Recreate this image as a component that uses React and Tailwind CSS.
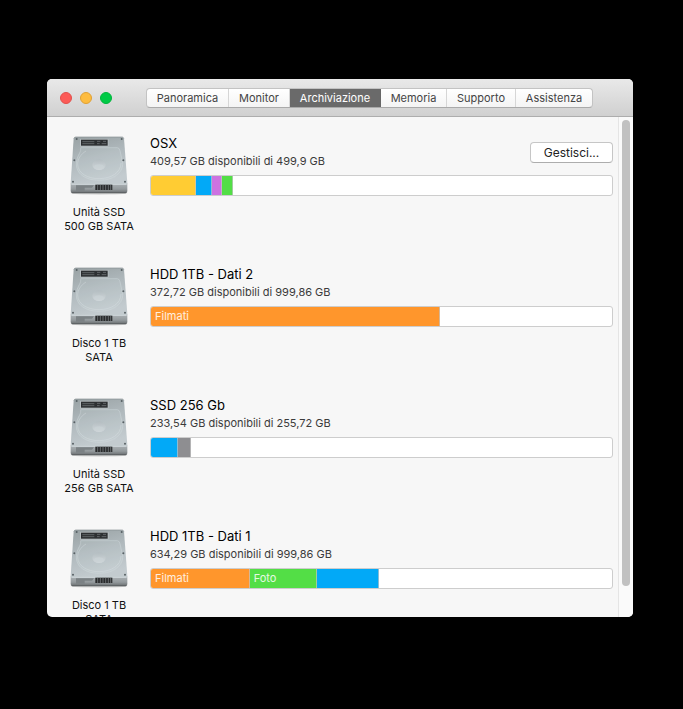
import React, { useId, useState } from "react";

const tabs = [
  { name: "Panoramica", width: "w-[82px]" },
  { name: "Monitor", width: "w-[61px]" },
  { name: "Archiviazione", width: "w-[91px]" },
  { name: "Memoria", width: "w-[66px]" },
  { name: "Supporto", width: "w-[69px]" },
  { name: "Assistenza", width: "w-[76px]" },
];

const disks = [
  {
    name: "OSX",
    free: "409,57 GB disponibili di 499,9 GB",
    label: ["Unità SSD", "500 GB SATA"],
    manage: true,
    segments: [
      { color: "bg-[#ffcc33]", share: 9.76 },
      { color: "bg-[#02a9f7]", share: 3.47 },
      { color: "bg-[#cc73e1]", share: 2.17 },
      { color: "bg-[#53de46]", share: 2.3 },
    ],
  },
  {
    name: "HDD 1TB - Dati 2",
    free: "372,72 GB disponibili di 999,86 GB",
    label: ["Disco 1 TB", "SATA"],
    segments: [{ color: "bg-[#ff962c]", share: 62.6, text: "Filmati" }],
  },
  {
    name: "SSD 256 Gb",
    free: "233,54 GB disponibili di 255,72 GB",
    label: ["Unità SSD", "256 GB SATA"],
    segments: [
      { color: "bg-[#02a9f7]", share: 5.86 },
      { color: "bg-[#8e8e91]", share: 2.82 },
    ],
  },
  {
    name: "HDD 1TB - Dati 1",
    free: "634,29 GB disponibili di 999,86 GB",
    label: ["Disco 1 TB", "SATA"],
    segments: [
      { color: "bg-[#ff962c]", share: 21.4, text: "Filmati" },
      { color: "bg-[#53de46]", share: 14.6, text: "Foto" },
      { color: "bg-[#02a9f7]", share: 13.4 },
    ],
  },
];

function DriveIcon() {
  const id = useId();
  const plate = id + "plate";
  const front = id + "front";
  const hub = id + "hub";
  return (
    <svg viewBox="0 0 174 180" className="h-[60px] w-[58px]" aria-hidden="true">
      <defs>
        <linearGradient id={plate} x1="0" y1="0" x2="0.3" y2="1">
          <stop offset="0" stopColor="#98a1a3" />
          <stop offset="0.5" stopColor="#b0b9bd" />
          <stop offset="1" stopColor="#c3cbcf" />
        </linearGradient>
        <linearGradient id={front} x1="0" y1="0" x2="0" y2="1">
          <stop offset="0" stopColor="#aeb4b7" />
          <stop offset="0.6" stopColor="#93999c" />
          <stop offset="1" stopColor="#65696b" />
        </linearGradient>
        <linearGradient id={hub} x1="0" y1="0" x2="0" y2="1">
          <stop offset="0" stopColor="#b4bdc1" />
          <stop offset="1" stopColor="#d0d7da" />
        </linearGradient>
      </defs>
      <ellipse cx="87" cy="174" rx="86" ry="5" fill="#000" opacity="0.12" />
      <path d="M2 144H172V168Q172 175 166 175H8Q2 175 2 168Z" fill={`url(#${front})`} />
      <path d="M17 6H156Q161 6 162 10L172 144Q172 149 166 149H8Q2 149 2 144L11 10Q12 6 17 6Z" fill={`url(#${plate})`} />
      <path d="M13 8Q14 6 18 6H155Q159 6 160 8" fill="none" stroke="#868e91" strokeWidth="2" />
      <path d="M4 148H170" stroke="#d5dcdf" strokeWidth="2" />
      <path
        d="M32 38H142Q149 39 150 47L158 84C160 115 128 136 88 136C47 136 17 117 19 84C21 63 30 55 32 46Z"
        fill="#d8e0e4"
        fillOpacity="0.14"
        stroke="#d2dadd"
        strokeWidth="2"
        strokeOpacity="0.7"
      />
      <path d="M48 48C32 58 23 72 23 88C24 115 53 131 87 131C124 131 153 112 153 84" fill="none" stroke="#d9e0e3" strokeWidth="2" opacity="0.6" />
      <ellipse cx="87" cy="89" rx="20" ry="16" fill={`url(#${hub})`} />
      <ellipse cx="87" cy="95" rx="14" ry="7" fill="#cbd3d6" opacity="0.7" />
      <rect x="30" y="12" width="86" height="23" rx="2" fill="#b7bec1" />
      <rect x="33" y="14" width="80" height="18" fill="#2d3032" />
      <path d="M37 20H73M37 26H73" stroke="#777d80" strokeWidth="2" />
      <path d="M81 19H91M99 19H108M81 26H89M95 26H109" stroke="#7d8386" strokeWidth="2" />
      <g fill="#576064">
        <circle cx="20" cy="12" r="3" />
        <circle cx="155" cy="12" r="3" />
        <circle cx="13" cy="76" r="3" />
        <circle cx="160" cy="76" r="3" />
        <circle cx="9" cy="140" r="3" />
        <circle cx="165" cy="140" r="3" />
      </g>
      <path d="M18 151H72L66 158H44V167H18Z" fill="#7b8184" />
      <rect x="76" y="149" width="51" height="16" fill="#292b2c" />
      <path d="M83 149V165M91 149V165M99 149V165M107 149V165M115 149V165M122 149V165" stroke="#858b8e" strokeWidth="2" />
      <path d="M6 173H168" stroke="#55595b" strokeWidth="2" />
    </svg>
  );
}

function UsageBar({ segments }) {
  return (
    <div className="mt-[5px] flex h-[21px] overflow-hidden rounded-[3px] border border-[#cdcdcd] bg-white">
      {segments.map((s, i) => (
        <div
          key={i}
          className={`shrink-0 overflow-hidden border-r border-[#c4c4c4]/70 pl-1 text-[11px] leading-[18px] text-white/85 ${s.color}`}
          style={{ width: `${s.share}%` }}
        >
          {s.text}
        </div>
      ))}
    </div>
  );
}

function Disk({ disk }) {
  return (
    <li className="flex h-[131px] shrink-0 gap-[11px]">
      <div className="flex w-20 shrink-0 flex-col items-center">
        <DriveIcon />
        <p className="mt-[10px] text-center text-[11px] leading-[14px] text-[#111]">
          {disk.label[0]}
          <br />
          {disk.label[1]}
        </p>
      </div>
      <div className="min-w-0 flex-1">
        <div className="flex h-[35px] items-center justify-between">
          <div>
            <h2 className="text-[13px] leading-4 text-black">{disk.name}</h2>
            <p className="pt-px text-[11px] leading-[18px] text-[#3b3b3b]">{disk.free}</p>
          </div>
          {disk.manage && (
            <button
              type="button"
              className="h-[21px] w-[83px] rounded-[4px] border border-[#c6c6c6] border-b-[#adadad] bg-white text-[12px] leading-[18px] text-[#222]"
            >
              Gestisci...
            </button>
          )}
        </div>
        <UsageBar segments={disk.segments} />
      </div>
    </li>
  );
}

export default function App() {
  const [active, setActive] = useState("Archiviazione");
  return (
    <div className="flex h-screen bg-black pt-[79px] pr-[50px] pb-[92px] pl-[47px] font-['Inter','Liberation_Sans',sans-serif]">
      <main className="flex min-w-0 flex-1 flex-col overflow-hidden rounded-[5px] bg-[#f7f7f7]">
        <header className="flex h-[38px] shrink-0 items-center border-b border-[#adadad] bg-linear-to-b from-[#e9e9e9] to-[#d0d0d0] pl-[13px]">
          <div className="flex gap-2">
            <button type="button" aria-label="Chiudi" className="size-3 rounded-full border border-[#e2504c] bg-[#fc5b57]" />
            <button type="button" aria-label="Riduci" className="size-3 rounded-full border border-[#e0a135] bg-[#fdbc40]" />
            <button type="button" aria-label="Ingrandisci" className="size-3 rounded-full border border-[#00b53c] bg-[#00ca46]" />
          </div>
          <nav className="ml-[34px] flex h-5 overflow-hidden rounded-[4px] border border-[#c3c3c3] border-b-[#aaaaaa] bg-linear-to-b from-white to-[#f4f4f4]">
            {tabs.map((t) => (
              <button
                key={t.name}
                type="button"
                aria-pressed={active === t.name}
                onClick={() => setActive(t.name)}
                className={`shrink-0 border-r text-[11px] leading-4 last:border-r-0 ${t.width} ${
                  active === t.name ? "border-[#666] bg-[#6a6a6a] text-white" : "border-[#d6d6d6] text-[#444]"
                }`}
              >
                {t.name}
              </button>
            ))}
          </nav>
        </header>
        <div className="flex min-h-0 flex-1">
          <ul className="flex min-w-0 flex-1 flex-col overflow-hidden pt-[18px] pr-[5px] pl-3">
            {disks.map((d) => (
              <Disk key={d.name} disk={d} />
            ))}
          </ul>
          <div className="flex w-[15px] shrink-0 flex-col items-center border-l border-[#e5e5e5] bg-[#fafafa] pt-[3px] pb-[31px]">
            <div className="w-2 flex-1 rounded-full bg-[#c1c1c1]" />
          </div>
        </div>
      </main>
    </div>
  );
}
